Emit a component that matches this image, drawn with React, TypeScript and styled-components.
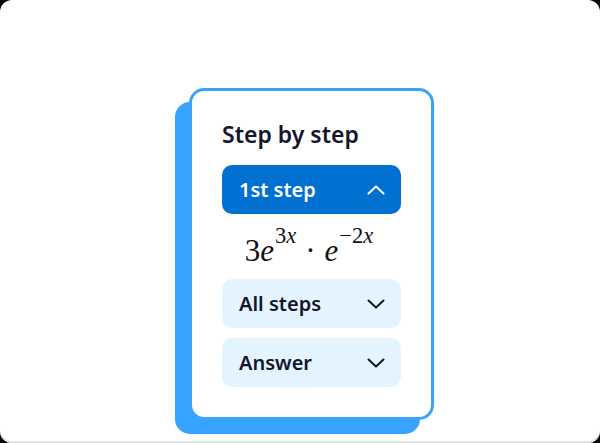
import React from "react";
import styled, { createGlobalStyle } from "styled-components";

const Global = createGlobalStyle`
  html, body { margin: 0; padding: 0; background: #000; }
  body { font-family: "Noto Sans", "Open Sans", sans-serif; }
`;

const Screen = styled.div`
  width: 600px;
  height: 443px;
  box-sizing: border-box;
  background: #fff;
  border-radius: 12px;
  box-shadow: inset 0 -2px 0 #e4e4e4;
  padding: 88px 0 0 189px;
  display: flex;
  align-items: flex-start;
`;

const Card = styled.div`
  width: 245px;
  height: 332px;
  box-sizing: border-box;
  background: #fff;
  border: 3px solid #3aa3fb;
  border-radius: 15px;
  box-shadow: -14px 14px 0 0 #37a2ff;
  padding: 29px 30px 0 30px;
  display: flex;
  flex-direction: column;
`;

const Title = styled.h2`
  margin: 0 0 16px 0;
  font-size: 23px;
  line-height: 29px;
  font-weight: 600;
  color: #15152e;
`;

const StepRow = styled.div<{ $active?: boolean }>`
  height: 49px;
  border-radius: 10px;
  background: ${(p) => (p.$active ? "#0071d1" : "#e4f4fe")};
  color: ${(p) => (p.$active ? "#ffffff" : "#15152e")};
  display: flex;
  align-items: center;
  justify-content: space-between;
  padding: 0 16px 0 17px;
  font-size: 20px;
  font-weight: 600;
  margin-bottom: 10px;
`;

const Math = styled.div`
  height: 65px;
  margin-top: -10px;
  display: flex;
  align-items: flex-end;
  justify-content: center;
  box-sizing: border-box;
  padding: 0 5px 14px 0;
  font-family: "Liberation Serif", "Times New Roman", serif;
  font-size: 31px;
  line-height: 28px;
  color: #111;
`;

const I = styled.span`
  font-style: italic;
`;

const Sup = styled.span`
  font-size: 22.5px;
  position: relative;
  top: -15px;
  margin-left: 1px;
`;

const Dot = styled.span`
  margin: 0 9px;
`;

const Chevron: React.FC<{ up?: boolean; color: string }> = ({ up, color }) => (
  <svg width="18" height="10" viewBox="0 0 18 10">
    <polyline
      points={up ? "1.5,8.5 9,1.5 16.5,8.5" : "1.5,1.5 9,8.5 16.5,1.5"}
      fill="none"
      stroke={color}
      strokeWidth="2"
      strokeLinecap="round"
      strokeLinejoin="round"
    />
  </svg>
);

export default function App() {
  return (
    <>
      <Global />
      <Screen>
        <Card>
          <Title>Step by step</Title>
          <StepRow $active>
            <span>1st step</span>
            <Chevron up color="#ffffff" />
          </StepRow>
          <Math>
            <span>3</span>
            <I>e</I>
            <Sup>
              3<I>x</I>
            </Sup>
            <Dot>·</Dot>
            <I>e</I>
            <Sup>
              −2<I>x</I>
            </Sup>
          </Math>
          <StepRow>
            <span>All steps</span>
            <Chevron color="#15152e" />
          </StepRow>
          <StepRow>
            <span>Answer</span>
            <Chevron color="#15152e" />
          </StepRow>
        </Card>
      </Screen>
    </>
  );
}
